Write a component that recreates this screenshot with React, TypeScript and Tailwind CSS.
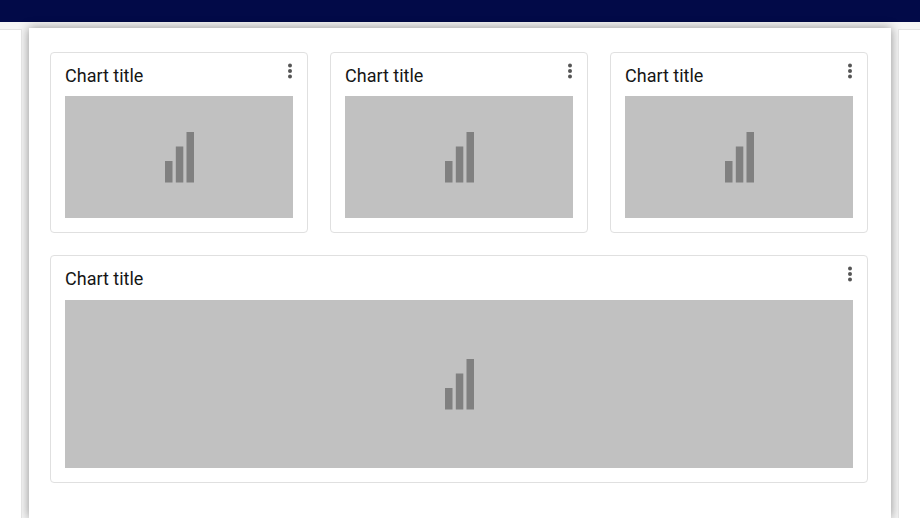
type Chart = {
  id: string;
  title: string;
  wide?: boolean;
};

const charts: Chart[] = [
  { id: "first", title: "Chart title" },
  { id: "second", title: "Chart title" },
  { id: "third", title: "Chart title" },
  { id: "overview", title: "Chart title", wide: true },
];

function MoreIcon() {
  return (
    <svg width="6" height="16" viewBox="0 0 6 16" fill="#555555" aria-hidden="true">
      <circle cx="3" cy="2.5" r="2" />
      <circle cx="3" cy="8" r="2" />
      <circle cx="3" cy="13.5" r="2" />
    </svg>
  );
}

function BarsIcon() {
  return (
    <svg width="29" height="51" viewBox="0 0 29 51" fill="#808080" aria-hidden="true">
      <rect x="0" y="29" width="7.5" height="21.5" />
      <rect x="10.8" y="14.5" width="7.5" height="36" />
      <rect x="21.5" y="0" width="7.5" height="50.5" />
    </svg>
  );
}

function ChartCard({ chart }: { chart: Chart }) {
  return (
    <section
      className={`rounded-[4px] border border-[#e0e0e0] bg-white px-[14px] pb-[14px] ${
        chart.wide ? "col-span-3" : ""
      }`}
    >
      <div
        className={`flex items-start justify-between ${chart.wide ? "h-[44px]" : "h-[43px]"}`}
      >
        <h2 className="pt-[11px] text-[18px] leading-6 text-[#161616]">{chart.title}</h2>
        <button type="button" aria-label="Chart options" className="pt-[10px]">
          <MoreIcon />
        </button>
      </div>
      <div
        className={`flex items-center justify-center bg-[#c1c1c1] ${
          chart.wide ? "h-[168px]" : "h-[122px]"
        }`}
      >
        <BarsIcon />
      </div>
    </section>
  );
}

export default function App() {
  return (
    <div className="flex min-h-screen flex-col bg-[#f5f5f5] font-['Roboto',sans-serif]">
      <header className="h-[22px] bg-[#020a48]" />
      <div className="flex flex-1 pt-[6px]">
        <aside className="z-10 mt-px w-[22px] border-t border-r border-[#e3e3e3] bg-white" />
        <main className="mx-[7px] flex-1 bg-white pt-6 pr-[23px] pl-[21px] shadow-[0_0_10px_rgba(0,0,0,0.42)]">
          <div className="grid grid-cols-3 gap-[22px]">
            {charts.map((chart) => (
              <ChartCard key={chart.id} chart={chart} />
            ))}
          </div>
        </main>
        <aside className="z-10 mt-px w-[22px] border-t border-l border-[#e3e3e3] bg-white" />
      </div>
    </div>
  );
}
